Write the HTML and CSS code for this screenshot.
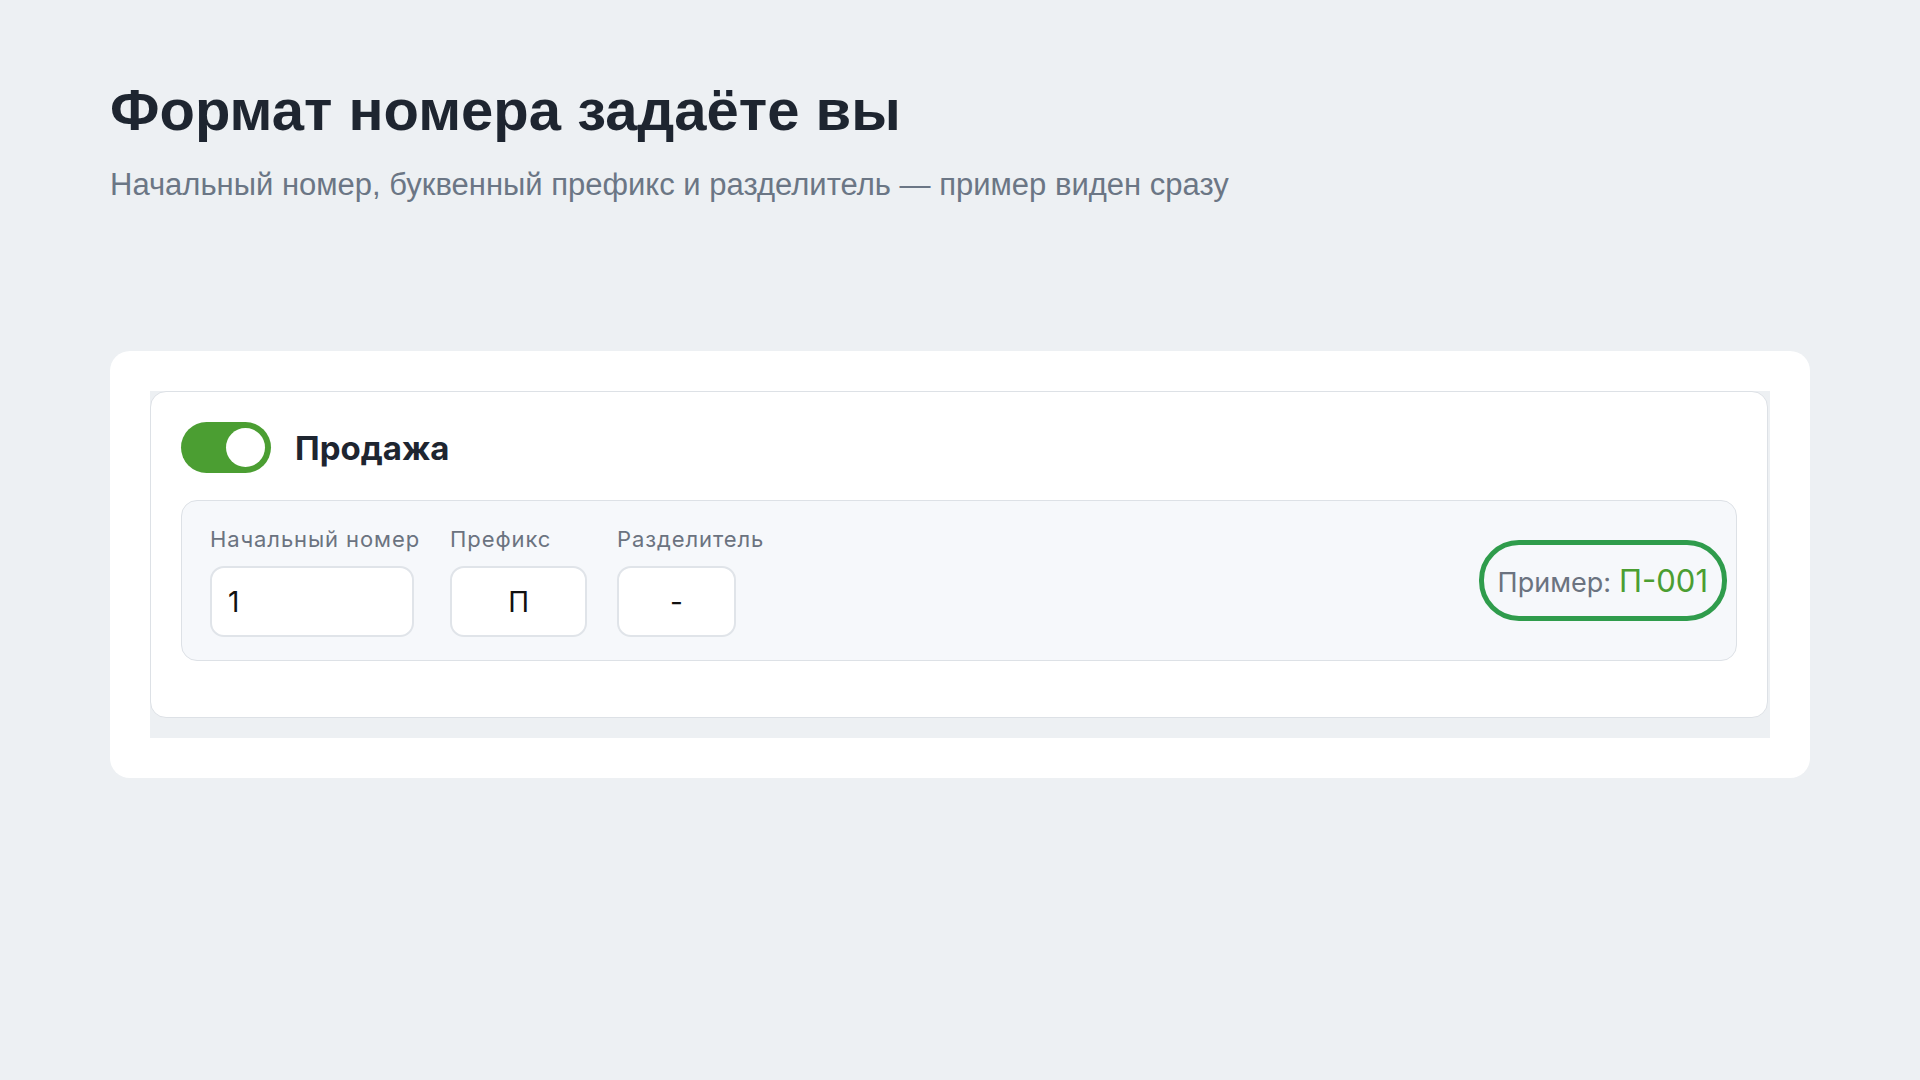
FILE: index.html
```html
<!DOCTYPE html>
<html lang="ru">
<head>
    <meta charset="UTF-8">
    <meta name="viewport" content="width=device-width, initial-scale=1.0">
    <title>Формат номера</title>
    <link rel="stylesheet" href="styles.css">
</head>
<body>
    <div class="page">
        <h1>Формат номера задаёте вы</h1>
        <p class="lead">Начальный номер, буквенный префикс и разделитель — пример виден сразу</p>

        <div class="showcase">
            <div class="preview">
                <div class="doc-card">
                    <div class="doc-head">
                        <span class="toggle on"><span class="knob"></span></span>
                        <span class="doc-title">Продажа</span>
                    </div>

                    <div class="numbering">
                        <div class="fields">
                            <div class="field">
                                <label for="start">Начальный номер</label>
                                <input type="text" id="start" class="inp inp-start" value="1">
                            </div>
                            <div class="field">
                                <label for="prefix">Префикс</label>
                                <input type="text" id="prefix" class="inp inp-prefix" value="П">
                            </div>
                            <div class="field">
                                <label for="sep">Разделитель</label>
                                <input type="text" id="sep" class="inp inp-sep" value="-">
                            </div>
                        </div>
                        <div class="sample"><span>Пример:</span> <b id="sample">П-001</b></div>
                    </div>
                </div>
            </div>
        </div>
    </div>

    <script>
        // keep the sample number in step with the fields
        function updateSample() {
            let start = parseInt(document.getElementById("start").value) || 1;
            let prefix = document.getElementById("prefix").value;
            let sep = document.getElementById("sep").value;
            document.getElementById("sample").innerText = prefix + sep + String(start).padStart(3, "0");
        }

        document.querySelectorAll(".inp").forEach(function (el) {
            el.addEventListener("input", updateSample);
        });
    </script>
</body>
</html>
```

FILE: styles.css
```css
body {
    margin: 0;
    background-color: #edf0f3;
    font-family: "Liberation Sans", Arial, sans-serif;
}
.page {
    padding: 77px 110px 0;
}
h1 {
    margin: 0;
    font-size: 58px;
    line-height: 66px;
    font-weight: bold;
    color: #1e2530;
}
.lead {
    margin: 24px 0 0;
    font-size: 31px;
    line-height: 36px;
    color: #6b7685;
}
.showcase {
    margin-top: 148px;
    background: white;
    border-radius: 20px;
    padding: 40px;
}
.preview {
    background-color: #edf0f3;
    padding: 0 2px 20px 0;
}
.doc-card {
    background: white;
    border: 1px solid #dde1e6;
    border-radius: 16px;
    padding: 30px 30px 56px;
    font-family: Inter, "Noto Sans", sans-serif;
}
.doc-head {
    display: flex;
    align-items: center;
    gap: 24px;
}
.toggle {
    width: 90px;
    height: 51px;
    border-radius: 26px;
    background-color: #cfd5dc;
    display: flex;
    align-items: center;
    padding: 0 6px;
    box-sizing: border-box;
}
.toggle.on {
    background-color: #4b9e32;
    justify-content: flex-end;
}
.knob {
    width: 39px;
    height: 39px;
    border-radius: 50%;
    background: white;
}
.doc-title {
    font-size: 33px;
    font-weight: 700;
    color: #1e2530;
}
.numbering {
    margin-top: 27px;
    background-color: #f6f8fb;
    border: 1px solid #dde1e6;
    border-radius: 16px;
    padding: 26px 9px 23px 28px;
    display: flex;
    align-items: center;
    justify-content: space-between;
}
.fields {
    display: flex;
    gap: 30px;
}
.field {
    display: flex;
    flex-direction: column;
    gap: 14px;
}
.field label {
    font-size: 22px;
    line-height: 25px;
    letter-spacing: 0.9px;
    color: #6b7380;
}
.inp {
    height: 71px;
    box-sizing: border-box;
    border: 2px solid #e0e4e9;
    border-radius: 14px;
    background: white;
    font-family: Inter, "Noto Sans", sans-serif;
    font-size: 28px;
    color: #111;
    padding: 0 16px;
    outline: none;
}
.inp-start {
    width: 204px;
}
.inp-prefix {
    width: 137px;
    text-align: center;
}
.inp-sep {
    width: 119px;
    text-align: center;
}
.sample {
    border: 5px solid #2f9c4c;
    border-radius: 40px;
    height: 81px;
    box-sizing: border-box;
    padding: 0 14px;
    margin-bottom: 4px;
    display: flex;
    align-items: baseline;
    justify-content: center;
    gap: 8px;
    color: #6b7380;
    line-height: 71px;
}
.sample span {
    font-size: 27px;
}
.sample b {
    font-weight: normal;
    font-size: 31px;
    color: #4b9e32;
}
```
